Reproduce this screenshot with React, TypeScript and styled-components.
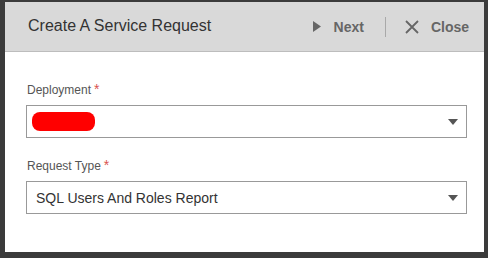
import React from 'react'
import styled, { createGlobalStyle } from 'styled-components';

const GlobalStyle = createGlobalStyle`
    html, body {
        margin: 0;
        padding: 0;
        background: #3b3b3b;
        font-family: "Liberation Sans", Arial, sans-serif;
    }
`;

const Backdrop = styled.div`
    width: 488px;
    height: 258px;
    box-sizing: border-box;
    padding: 2px 4px 6px 5px;
    background: #3b3b3b;
`;

const Dialog = styled.div`
    height: 100%;
    display: flex;
    flex-direction: column;
    background: #ffffff;
`;

const Header = styled.div`
    height: 49px;
    display: flex;
    align-items: center;
    padding: 0 15px 0 23px;
    background: #d9d9d9;
    border-bottom: 1px solid #bdbdbd;
`;

const Title = styled.div`
    flex: 1;
    font-size: 16px;
    color: #333333;
    padding-bottom: 2px;
`;

const ActionButton = styled.div`
    display: flex;
    align-items: center;
    gap: 12px;
    font-size: 14px;
    font-weight: bold;
    color: #666666;
`;

const Divider = styled.div`
    width: 1px;
    height: 20px;
    margin: 0 19px 0 21px;
    background: #a9a9a9;
`;

const Body = styled.div`
    display: flex;
    flex-direction: column;
    padding: 30px 17px 0 21px;
`;

const Field = styled.div`
    display: flex;
    flex-direction: column;
    margin-bottom: 20px;
`;

const Label = styled.div`
    height: 14px;
    line-height: 14px;
    font-size: 12px;
    color: #555555;
    margin-bottom: 9px;
    padding-left: 1px;
`;

const Required = styled.span`
    color: #d9534f;
    margin-left: 3px;
    font-size: 14px;
    line-height: 1;
`;

const SelectBox = styled.div`
    height: 33px;
    box-sizing: border-box;
    display: flex;
    align-items: center;
    padding: 0 8px 0 9px;
    border: 1px solid #999999;
    font-size: 14px;
    color: #333333;
`;

const SelectValue = styled.div`
    flex: 1;
`;

const Redacted = styled.div`
    width: 63px;
    height: 19px;
    margin-left: -4px;
    border-radius: 8px;
    background: #ff0000;
`;

const Caret = styled.div`
    width: 0;
    height: 0;
    border-left: 5px solid transparent;
    border-right: 5px solid transparent;
    border-top: 6px solid #555555;
`;

const PlayIcon = () => (
    <svg width="9" height="11" viewBox="0 0 9 11">
        <path d="M0 0 L8 5.5 L0 11 Z" fill="#666666" />
    </svg>
);

const CloseIcon = () => (
    <svg width="14" height="14" viewBox="0 0 14 14">
        <path d="M1 1 L13 13 M13 1 L1 13" stroke="#666666" strokeWidth="1.8" fill="none" />
    </svg>
);

const App: React.FC = () => {
    return (
        <>
            <GlobalStyle />
            <Backdrop>
                <Dialog>
                    <Header>
                        <Title>Create A Service Request</Title>
                        <ActionButton>
                            <PlayIcon />
                            <span>Next</span>
                        </ActionButton>
                        <Divider />
                        <ActionButton>
                            <CloseIcon />
                            <span>Close</span>
                        </ActionButton>
                    </Header>
                    <Body>
                        <Field>
                            <Label>Deployment<Required>*</Required></Label>
                            <SelectBox>
                                <SelectValue><Redacted /></SelectValue>
                                <Caret />
                            </SelectBox>
                        </Field>
                        <Field>
                            <Label>Request Type<Required>*</Required></Label>
                            <SelectBox>
                                <SelectValue>SQL Users And Roles Report</SelectValue>
                                <Caret />
                            </SelectBox>
                        </Field>
                    </Body>
                </Dialog>
            </Backdrop>
        </>
    );
}

export default App;
